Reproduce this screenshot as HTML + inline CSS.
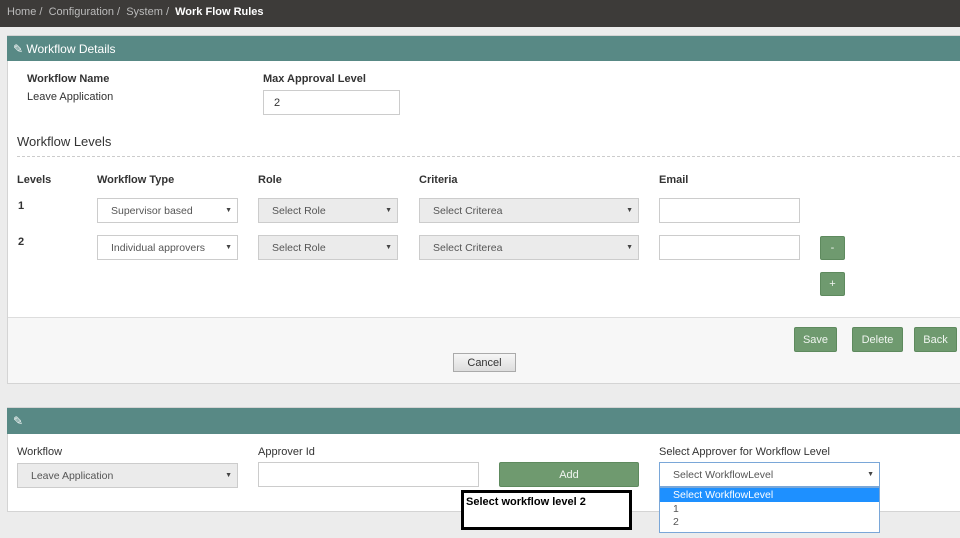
<!DOCTYPE html><html><head><style>
*{box-sizing:border-box;margin:0;padding:0}
body{width:960px;height:538px;background:#ececec;font-family:"Liberation Sans",sans-serif;font-size:11px;color:#333;position:relative;overflow:hidden}
.a{position:absolute}
.top{left:0;top:0;width:960px;height:27px;background:#3d3b39;color:#bbb;font-size:11px;padding:6px 0 0 7px}
.top b{color:#fff;font-weight:bold}
.panel{background:#fff;border:1px solid #d4d4d4}
.hd{background:#588985;color:#fff;font-size:12px}
.lbl{font-weight:bold;font-size:11px;color:#333}
.sel{border:1px solid #ccc;height:25px;padding:6px 0 0 13px;font-size:10.5px;color:#555;background:#fff}
.sel:after{content:"▼";position:absolute;right:5px;top:8px;font-size:7px;color:#444}
.g{background:#ebebeb}
.inp{border:1px solid #ccc;height:25px;background:#fff;padding:6px 0 0 10px;font-size:11px}
.btn{background:#6f9a6f;color:#f0f5f0;border:1px solid #5e8a5e;text-align:center;font-size:11px;border-radius:2px}
</style></head><body>
<div class="a top">Home / &nbsp;Configuration / &nbsp;System / &nbsp;<b>Work Flow Rules</b></div>

<div class="a panel" style="left:7px;top:35px;width:960px;height:349px"></div>
<div class="a hd" style="left:7px;top:36px;width:953px;height:25px;padding:6px 0 0 6px">✎ Workflow Details</div>
<div class="a lbl" style="left:27px;top:73px">Workflow Name</div>
<div class="a" style="left:27px;top:91px">Leave Application</div>
<div class="a lbl" style="left:263px;top:73px">Max Approval Level</div>
<div class="a inp" style="left:263px;top:90px;width:137px">2</div>
<div class="a" style="left:17px;top:134px;font-size:13px">Workflow Levels</div>
<div class="a" style="left:17px;top:156px;width:943px;border-top:1px dashed #ccc"></div>
<div class="a lbl" style="left:17px;top:174px">Levels</div>
<div class="a lbl" style="left:97px;top:174px">Workflow Type</div>
<div class="a lbl" style="left:258px;top:174px">Role</div>
<div class="a lbl" style="left:419px;top:174px">Criteria</div>
<div class="a lbl" style="left:659px;top:174px">Email</div>
<div class="a lbl" style="left:18px;top:200px">1</div>
<div class="a lbl" style="left:18px;top:236px">2</div>
<div class="a sel" style="left:97px;top:198px;width:141px">Supervisor based</div>
<div class="a sel g" style="left:258px;top:198px;width:140px">Select Role</div>
<div class="a sel g" style="left:419px;top:198px;width:220px">Select Criterea</div>
<div class="a inp" style="left:659px;top:198px;width:141px"></div>
<div class="a sel" style="left:97px;top:235px;width:141px">Individual approvers</div>
<div class="a sel g" style="left:258px;top:235px;width:140px">Select Role</div>
<div class="a sel g" style="left:419px;top:235px;width:220px">Select Criterea</div>
<div class="a inp" style="left:659px;top:235px;width:141px"></div>
<div class="a btn" style="left:820px;top:236px;width:25px;height:24px;padding-top:5px">-</div>
<div class="a btn" style="left:820px;top:272px;width:25px;height:24px;padding-top:5px">+</div>
<div class="a" style="left:8px;top:317px;width:952px;height:66px;background:#f7f7f7;border-top:1px solid #ddd"></div>
<div class="a btn" style="left:794px;top:327px;width:43px;height:25px;padding-top:6px">Save</div>
<div class="a btn" style="left:852px;top:327px;width:51px;height:25px;padding-top:6px">Delete</div>
<div class="a btn" style="left:914px;top:327px;width:43px;height:25px;padding-top:6px">Back</div>
<div class="a" style="left:453px;top:353px;width:63px;height:19px;border:1px solid #aaa;background:linear-gradient(#f6f6f6,#ddd);text-align:center;padding-top:3px">Cancel</div>

<div class="a panel" style="left:7px;top:407px;width:960px;height:105px"></div>
<div class="a hd" style="left:7px;top:408px;width:953px;height:26px;padding:6px 0 0 6px">✎</div>
<div class="a" style="left:17px;top:446px">Workflow</div>
<div class="a" style="left:258px;top:446px">Approver Id</div>
<div class="a" style="left:659px;top:446px">Select Approver for Workflow Level</div>
<div class="a sel g" style="left:17px;top:463px;width:221px">Leave Application</div>
<div class="a inp" style="left:258px;top:462px;width:221px"></div>
<div class="a btn" style="left:499px;top:462px;width:140px;height:25px;padding-top:6px">Add</div>
<div class="a sel" style="left:659px;top:462px;width:221px;border-color:#7aa7d8">Select WorkflowLevel</div>
<div class="a" style="left:659px;top:487px;width:221px;height:46px;border:1px solid #7aa7d8;background:#fff;font-size:10.5px">
<div style="background:#1e90ff;color:#fff;padding:1px 0 1px 13px">Select WorkflowLevel</div>
<div style="padding:1px 0 0 13px;color:#555">1</div>
<div style="padding:1px 0 0 13px;color:#555">2</div></div>
<div class="a" style="left:461px;top:490px;width:171px;height:40px;border:3px solid #000;background:#fff;font-weight:bold;font-size:11px;padding:3px 0 0 2px;color:#000">Select workflow level 2</div>
</body></html>
